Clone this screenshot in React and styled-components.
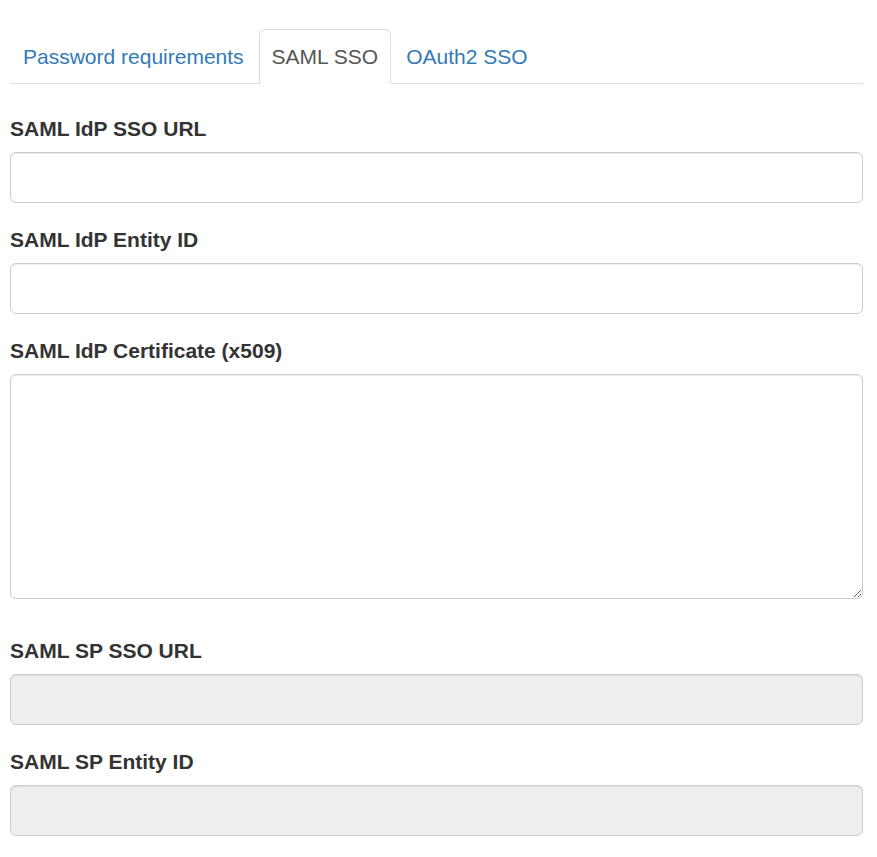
import React, { useState } from 'react'
import styled, { createGlobalStyle } from 'styled-components'

const GlobalStyle = createGlobalStyle`
  body {
    margin: 0;
    background: #fff;
    font-family: "Liberation Sans", Arial, Helvetica, sans-serif;
    font-size: 21px;
    line-height: 30px;
    color: #333;
  }
  * { box-sizing: border-box; }
`

const Page = styled.div`
  padding: 29px 14px 20px 10px;
`

const Tabs = styled.ul`
  display: flex;
  list-style: none;
  margin: 0;
  padding: 0;
  border-bottom: 1px solid #ddd;
`

const Tab = styled.li`
  margin-right: 2px;
  margin-bottom: -1px;
`

const TabLink = styled.a`
  display: block;
  padding: 12px 12px 11px;
  border: 1px solid ${p => (p.$active ? '#ddd' : 'transparent')};
  border-bottom-color: ${p => (p.$active ? '#fff' : 'transparent')};
  border-radius: 6px 6px 0 0;
  background: ${p => (p.$active ? '#fff' : 'transparent')};
  color: ${p => (p.$active ? '#555' : '#337ab7')};
  text-decoration: none;
  cursor: ${p => (p.$active ? 'default' : 'pointer')};
`

const Content = styled.div`
  padding-top: 30px;
`

const Group = styled.div`
  margin-bottom: ${p => p.$extra ? '37px' : '22px'};
`

const Label = styled.label`
  display: block;
  font-weight: bold;
  margin-bottom: 8px;
`

const Input = styled.input`
  display: block;
  width: 100%;
  height: 51px;
  padding: 9px 18px;
  font: inherit;
  color: #555;
  background: ${p => (p.disabled ? '#eee' : '#fff')};
  border: 1px solid #ccc;
  border-radius: 6px;
  box-shadow: inset 0 1px 1px rgba(0, 0, 0, 0.075);
  outline: none;
`

const TextArea = styled.textarea`
  display: block;
  width: 100%;
  height: 225px;
  padding: 9px 18px;
  font: inherit;
  color: #555;
  background: #fff;
  border: 1px solid #ccc;
  border-radius: 6px;
  box-shadow: inset 0 1px 1px rgba(0, 0, 0, 0.075);
  outline: none;
  resize: vertical;
`

const tabs = ['Password requirements', 'SAML SSO', 'OAuth2 SSO']

const App = () => {
  const [active, setActive] = useState(1)
  return (
    <Page>
      <GlobalStyle />
      <Tabs>
        {tabs.map((t, i) => (
          <Tab key={t}>
            <TabLink $active={i === active} onClick={() => setActive(i)}>{t}</TabLink>
          </Tab>
        ))}
      </Tabs>
      <Content>
        <Group>
          <Label>SAML IdP SSO URL</Label>
          <Input type="text" />
        </Group>
        <Group>
          <Label>SAML IdP Entity ID</Label>
          <Input type="text" />
        </Group>
        <Group $extra>
          <Label>SAML IdP Certificate (x509)</Label>
          <TextArea />
        </Group>
        <Group>
          <Label>SAML SP SSO URL</Label>
          <Input type="text" disabled />
        </Group>
        <Group>
          <Label>SAML SP Entity ID</Label>
          <Input type="text" disabled />
        </Group>
      </Content>
    </Page>
  )
}

export default App
